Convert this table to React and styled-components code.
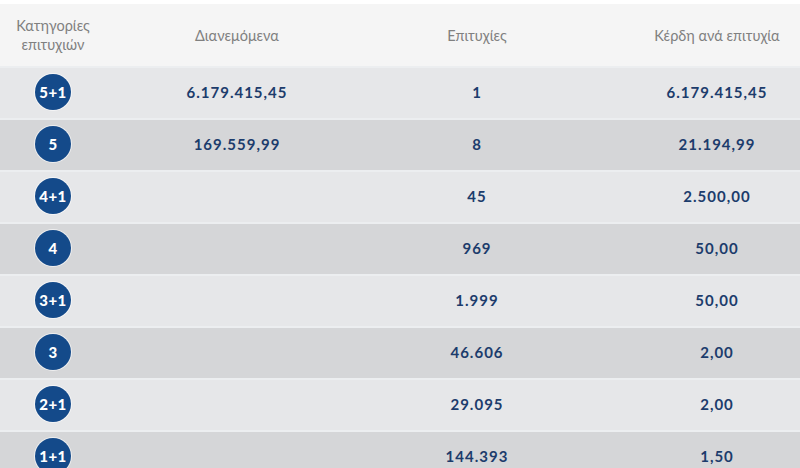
import React from 'react';
import styled, { createGlobalStyle } from 'styled-components';

const GlobalStyle = createGlobalStyle`
  body {
    margin: 0;
    background: #ffffff;
    font-family: "Lato", "Open Sans", sans-serif;
  }
`;

const Table = styled.div`
  width: 800px;
  height: 468px;
  overflow: hidden;
  padding-top: 4px;
  box-sizing: border-box;
`;

const Grid = styled.div`
  display: grid;
  grid-template-columns: 106px 262px 218px 1fr;
  align-items: center;
  box-sizing: border-box;
  height: ${(p) => p.$height}px;
  background: ${(p) => p.$bg};
  border-top: ${(p) => (p.$line ? '2px solid #eceef0' : 'none')};
`;

const HeadCell = styled.div`
  text-align: center;
  color: #808080;
  font-size: 14.5px;
  line-height: 19px;
  padding-left: ${(p) => p.$pad || 0}px;
`;

const Cell = styled.div`
  text-align: center;
  color: #1c3c6c;
  font-weight: 700;
  font-size: 15px;
  letter-spacing: 1px;
  padding-left: ${(p) => p.$pad || 0}px;
  padding-bottom: 2px;
`;

const BadgeWrap = styled.div`
  display: flex;
  justify-content: center;
  padding-bottom: 2px;
`;

const Badge = styled.div`
  width: 36px;
  height: 36px;
  border-radius: 50%;
  background: #144a8a;
  color: #ffffff;
  font-weight: 900;
  font-size: 15px;
  letter-spacing: 0.5px;
  display: flex;
  align-items: center;
  justify-content: center;
  box-shadow: 0 0 0 1px rgba(255, 255, 255, 0.6);
`;

const rows = [
  ['5+1', '6.179.415,45', '1', '6.179.415,45'],
  ['5', '169.559,99', '8', '21.194,99'],
  ['4+1', '', '45', '2.500,00'],
  ['4', '', '969', '50,00'],
  ['3+1', '', '1.999', '50,00'],
  ['3', '', '46.606', '2,00'],
  ['2+1', '', '29.095', '2,00'],
  ['1+1', '', '144.393', '1,50'],
];

export default function App() {
  return (
    <>
      <GlobalStyle />
      <Table>
        <Grid $height={62} $bg="#f5f5f5">
          <HeadCell>
            Κατηγορίες
            <br />
            επιτυχιών
          </HeadCell>
          <HeadCell>Διανεμόμενα</HeadCell>
          <HeadCell>Επιτυχίες</HeadCell>
          <HeadCell $pad={48}>Κέρδη ανά επιτυχία</HeadCell>
        </Grid>
        {rows.map(([cat, dist, wins, prize], i) => (
          <Grid key={cat} $height={52} $line $bg={i % 2 === 0 ? '#e6e7e9' : '#d5d6d8'}>
            <BadgeWrap>
              <Badge>{cat}</Badge>
            </BadgeWrap>
            <Cell>{dist}</Cell>
            <Cell>{wins}</Cell>
            <Cell $pad={48}>{prize}</Cell>
          </Grid>
        ))}
      </Table>
    </>
  );
}
